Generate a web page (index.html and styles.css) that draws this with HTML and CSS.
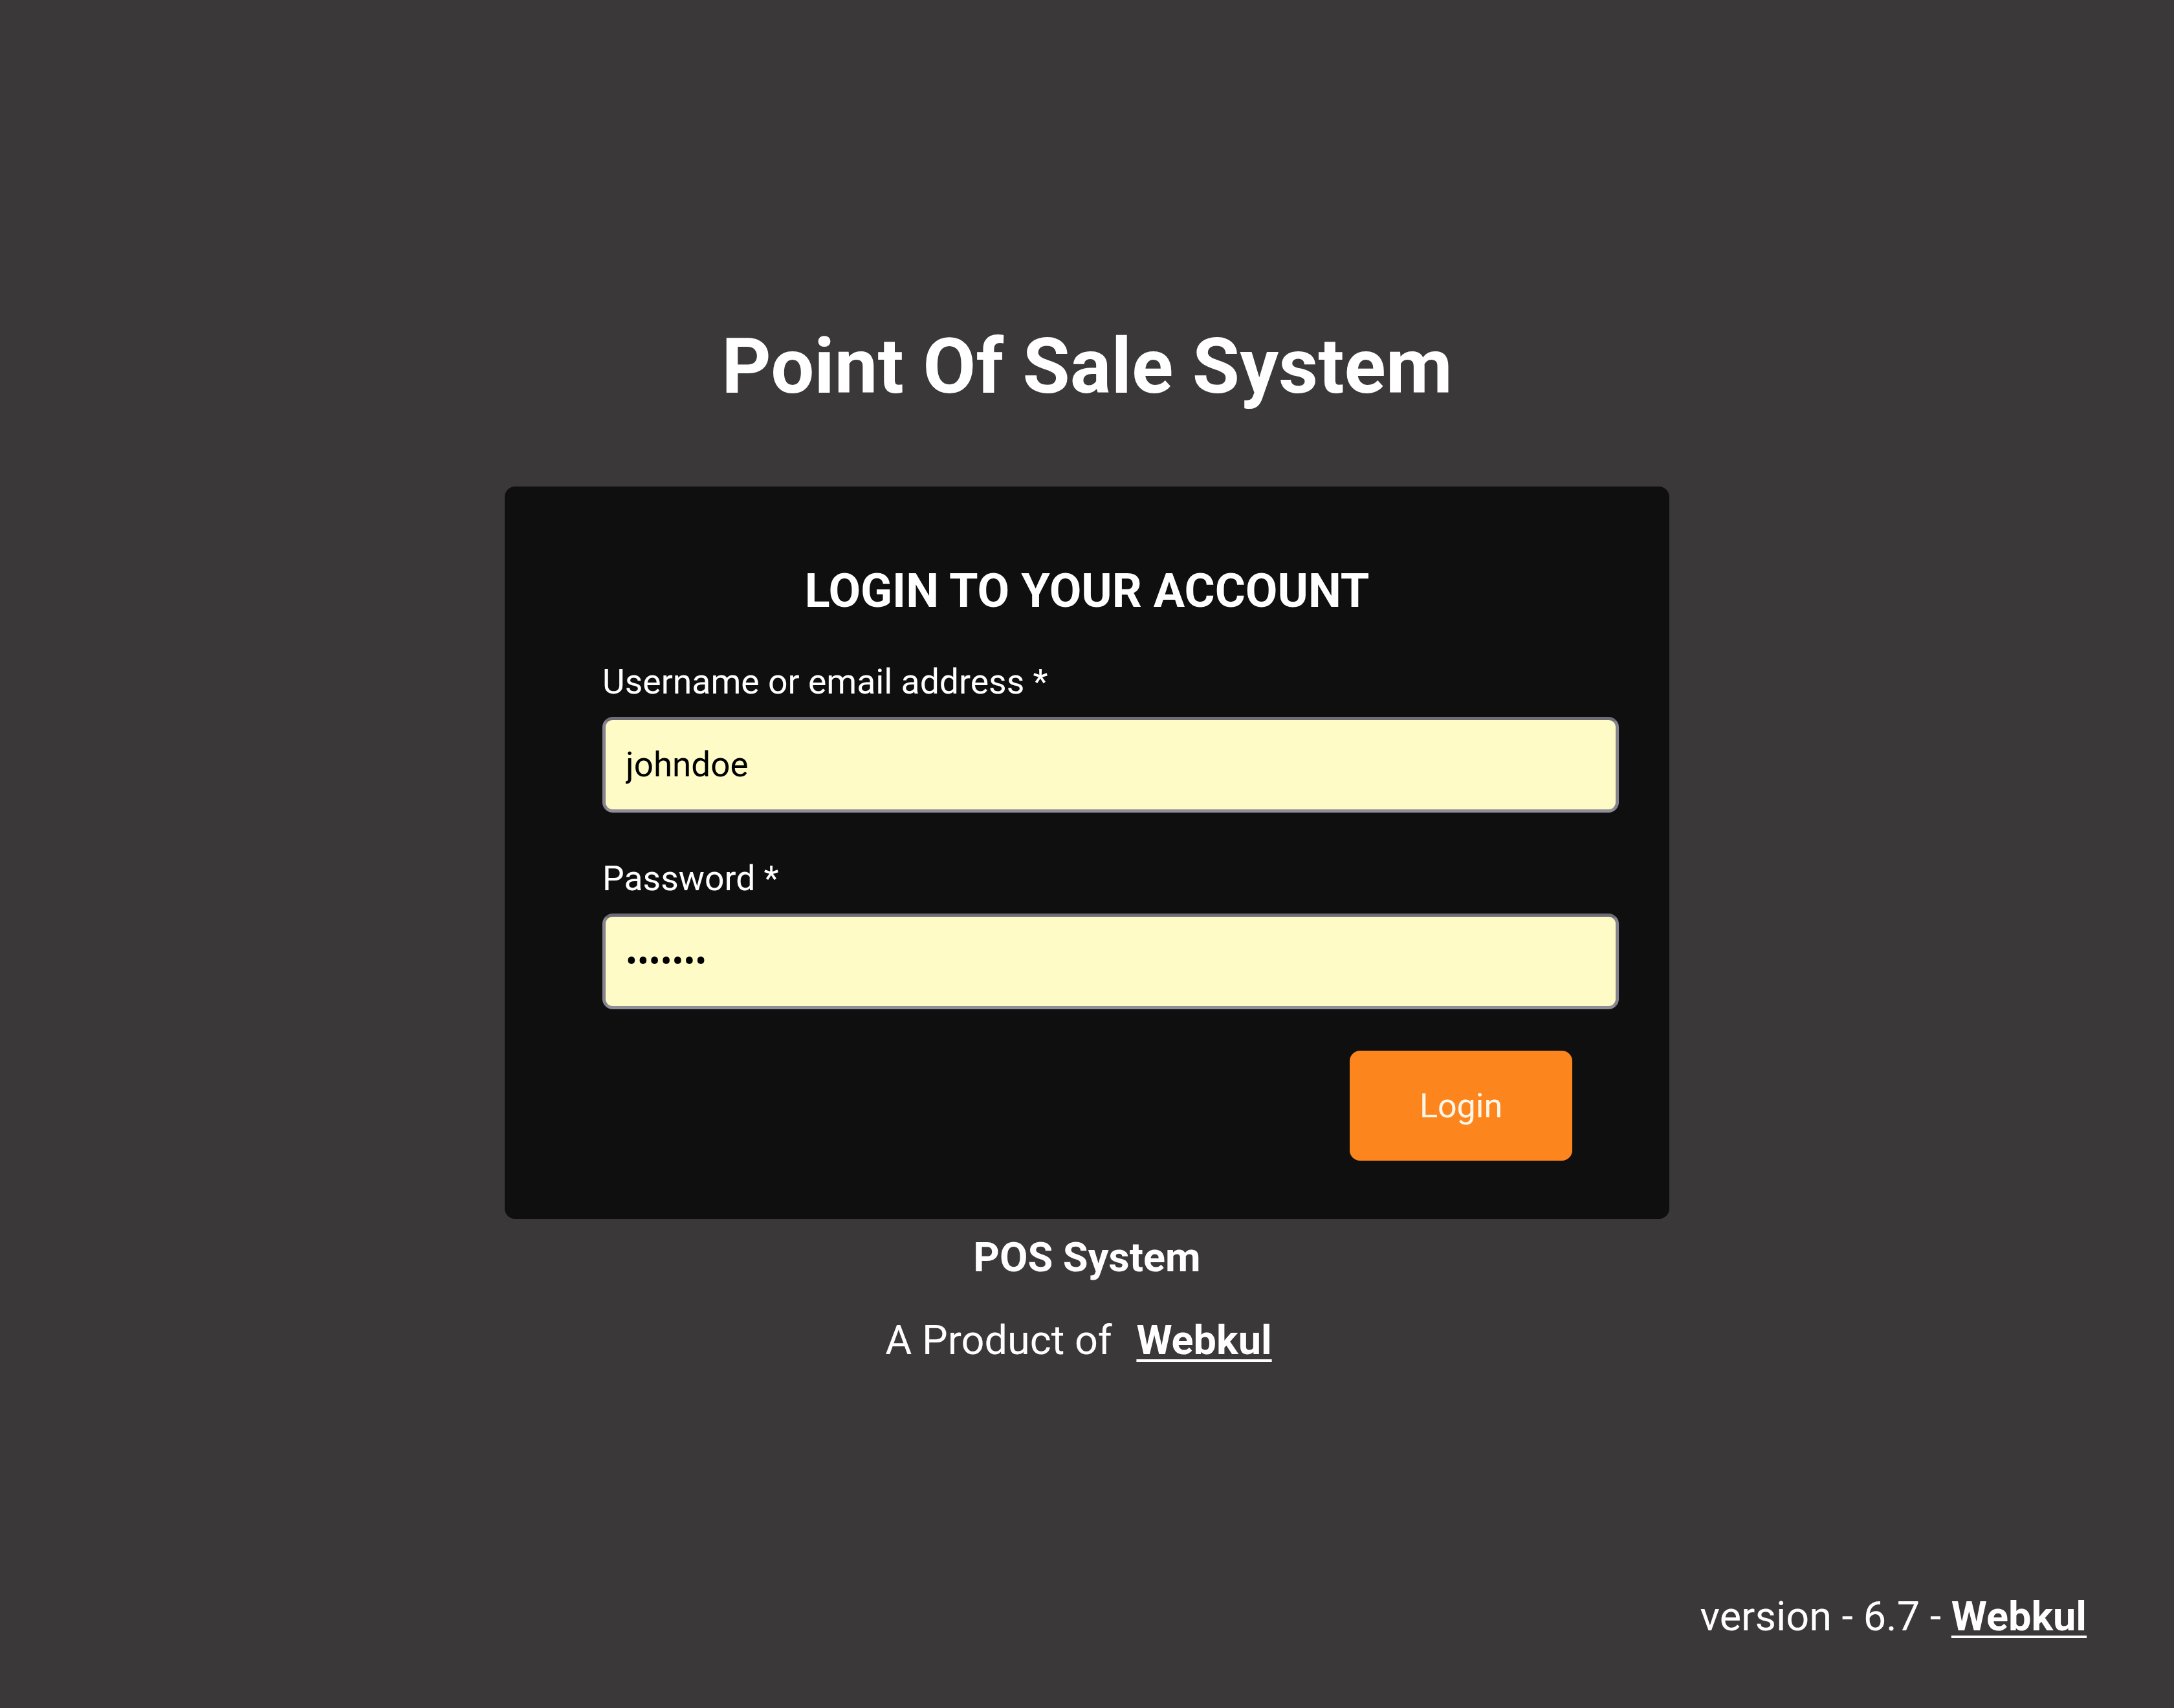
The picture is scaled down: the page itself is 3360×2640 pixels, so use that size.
FILE: index.html
```html
<!DOCTYPE html>
<html lang="en">
<head>
<meta charset="utf-8">
<title>Point Of Sale System</title>
<link rel="stylesheet" href="styles.css">
</head>
<body>
<div class="page">
  <main class="main">
    <h1 class="title">Point Of Sale System</h1>
    <section class="card">
      <h2 class="card-title">LOGIN TO YOUR ACCOUNT</h2>
      <form class="form">
        <label class="label" for="user">Username or email address *</label>
        <input class="input" id="user" type="text" value="johndoe">
        <label class="label label-gap" for="pass">Password *</label>
        <input class="input" id="pass" type="password" value="1234567">
        <div class="actions">
          <button class="btn" type="button">Login</button>
        </div>
      </form>
    </section>
    <p class="brand">POS System</p>
    <p class="product">A Product of <a class="link product-link" href="#">Webkul</a></p>
  </main>
  <footer class="footer">version - 6.7 - <a class="link" href="#">Webkul</a></footer>
</div>
</body>
</html>
```

FILE: styles.css
```css
* { box-sizing: border-box; }
html, body { margin: 0; padding: 0; }
body {
  background: #3a3839;
  color: #ffffff;
  font-family: Roboto, "Liberation Sans", sans-serif;
}
.page {
  min-height: 100vh;
  display: flex;
  flex-direction: column;
}
.main {
  display: flex;
  flex-direction: column;
  align-items: center;
  padding-top: 507px;
}
.title {
  margin: 0;
  font-size: 119px;
  line-height: 120px;
  font-weight: 700;
}
.card {
  margin-top: 125px;
  width: 1800px;
  background: #0f0f0f;
  border-radius: 16px;
  padding: 126px 0 90px 0;
}
.card-title {
  margin: 0;
  text-align: center;
  font-size: 72px;
  line-height: 72px;
  font-weight: 700;
}
.form {
  display: flex;
  flex-direction: column;
  padding: 77px 78px 0 151px;
}
.label {
  font-size: 53.5px;
  line-height: 53px;
  font-weight: 400;
}
.label-gap { margin-top: 75px; }
.input {
  margin-top: 28px;
  width: 100%;
  height: 148px;
  background: #fffbc7;
  border: 5px solid #85838e;
  border-top-color: #6e6d75;
  border-bottom-color: #8f8d98;
  border-radius: 16px;
  padding: 0 31px;
  font-family: Roboto, "Liberation Sans", sans-serif;
  font-size: 53px;
  color: #000000;
  outline: none;
}
.actions {
  display: flex;
  justify-content: flex-end;
  margin-top: 64px;
  padding-right: 72px;
}
.btn {
  width: 344px;
  height: 170px;
  background: #fd851d;
  border: none;
  border-radius: 16px;
  color: #fff7ea;
  font-family: Roboto, "Liberation Sans", sans-serif;
  font-size: 52px;
  font-weight: 400;
  padding: 0;
}
.brand {
  margin: 28px 0 0 0;
  font-size: 63px;
  line-height: 63px;
  font-weight: 700;
}
.product {
  margin: 65px 0 0 0;
  padding-right: 26px;
  font-size: 63px;
  line-height: 63px;
  font-weight: 400;
}
.link {
  color: #ffffff;
  font-weight: 700;
  text-decoration: underline;
  text-decoration-thickness: 4px;
  text-underline-offset: 8px;
}
.product-link { margin-left: 22px; }
.footer {
  margin-top: auto;
  align-self: flex-end;
  padding: 0 135px 110px 0;
  font-size: 63px;
  line-height: 63px;
  font-weight: 400;
}
```
